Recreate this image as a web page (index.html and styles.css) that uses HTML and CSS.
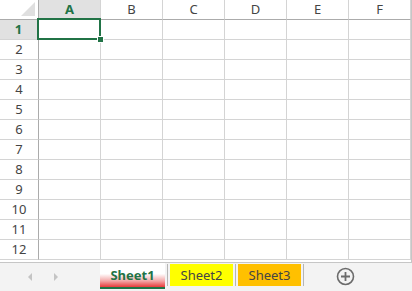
FILE: index.html
```html
<html>
  <head>
    <link rel="stylesheet" href="styles.css">
  </head>
  <body>
    <div class="book">
      <div class="sheet" id="sheet">
        <div class="corner"></div>
      </div>
      <div class="tabbar">
        <div class="nav">
          <span class="arrow arrow-left"></span>
          <span class="arrow arrow-right"></span>
        </div>
        <div class="tabs">
          <span class="tab tab-active">Sheet1</span>
          <span class="sep"></span>
          <span class="tab tab-yellow">Sheet2</span>
          <span class="sep"></span>
          <span class="tab tab-orange">Sheet3</span>
          <span class="sep"></span>
          <span class="add">
            <svg width="19" height="19" viewBox="0 0 19 19">
              <circle cx="9.5" cy="9.5" r="8" fill="none" stroke="#6b6b6b" stroke-width="1.6"/>
              <path d="M9.5 5v9M5 9.5h9" stroke="#6b6b6b" stroke-width="1.8"/>
            </svg>
          </span>
        </div>
      </div>
    </div>

    <script>
      const sheet = document.getElementById('sheet');
      const cols = ['A', 'B', 'C', 'D', 'E', 'F'];

      cols.forEach((c, i) => {
        const head = document.createElement('div');
        head.className = 'col-head' + (i === 0 ? ' is-current' : '');
        head.textContent = c;
        sheet.appendChild(head);
      });

      for (let r = 1; r <= 12; r += 1) {
        const head = document.createElement('div');
        head.className = 'row-head' + (r === 1 ? ' is-current' : '');
        head.textContent = r;
        sheet.appendChild(head);
        cols.forEach((c, i) => {
          const cell = document.createElement('div');
          cell.className = 'cell' + (r === 1 && i === 0 ? ' is-selected' : '');
          sheet.appendChild(cell);
        });
      }
    </script>
  </body>
</html>
```
FILE: styles.css
```css
html,
body {
  margin: 0;
  padding: 0;
}
body {
  font-family: "Noto Sans", "Open Sans", sans-serif;
  font-size: 13px;
  color: #444;
  background: #fff;
}
.book {
  width: 412px;
  height: 291px;
  display: flex;
  flex-direction: column;
  overflow: hidden;
}
.sheet {
  display: grid;
  grid-template-columns: 39px repeat(6, 62px);
  grid-template-rows: repeat(13, 20px);
  height: 262px;
  border-right: 1px solid #c6c6c6;
  box-sizing: border-box;
  width: 412px;
}
.corner {
  position: relative;
  background: #fff;
  border-right: 1px solid #ababab;
  border-bottom: 1px solid #ababab;
}
.corner::after {
  content: "";
  position: absolute;
  right: 3px;
  bottom: 3px;
  border-left: 14px solid transparent;
  border-bottom: 14px solid #dfdfdf;
}
.col-head,
.row-head {
  display: flex;
  align-items: center;
  justify-content: center;
  color: #444;
  line-height: 1;
}
.col-head {
  border-right: 1px solid #d4d4d4;
  border-bottom: 1px solid #ababab;
}
.row-head {
  border-right: 1px solid #ababab;
  border-bottom: 1px solid #d4d4d4;
}
.is-current {
  background: #e1e1e1;
  color: #217346;
  font-weight: bold;
}
.col-head.is-current {
  border-bottom: 2px solid #217346;
}
.row-head.is-current {
  border-right: 2px solid #217346;
}
.cell {
  border-right: 1px solid #d4d4d4;
  border-bottom: 1px solid #d4d4d4;
}
.is-selected {
  position: relative;
}
.is-selected::before {
  content: "";
  position: absolute;
  left: -2px;
  top: -2px;
  right: -1px;
  bottom: -1px;
  border: 2px solid #217346;
}
.is-selected::after {
  content: "";
  position: absolute;
  right: -4px;
  bottom: -4px;
  width: 5px;
  height: 5px;
  background: #217346;
  border: 1px solid #fff;
}
.tabbar {
  flex: 1;
  display: flex;
  align-items: stretch;
  background: #f3f3f3;
  border-top: 1px solid #c6c6c6;
}
.nav {
  width: 100px;
  display: flex;
  align-items: center;
  justify-content: center;
  gap: 22px;
  padding-right: 14px;
  box-sizing: border-box;
}
.arrow {
  width: 0;
  height: 0;
  border-top: 4px solid transparent;
  border-bottom: 4px solid transparent;
}
.arrow-left {
  border-right: 4px solid #c4c4c4;
}
.arrow-right {
  border-left: 4px solid #c4c4c4;
}
.tabs {
  display: flex;
  align-items: flex-start;
}
.tab {
  width: 63px;
  height: 22px;
  margin-top: 1px;
  display: flex;
  align-items: center;
  justify-content: center;
  color: #444;
}
.tab-active {
  width: 65px;
  height: 24px;
  margin-top: 0;
  color: #217346;
  font-weight: bold;
  background: linear-gradient(#fff 0%, #fff 45%, #f4a6a6 75%, #e83a3a 100%);
  border-bottom: 2px solid #217346;
}
.tab-yellow {
  background: #ffff00;
  margin-left: 2px;
}
.tab-orange {
  background: #ffc000;
  margin-left: 2px;
}
.sep {
  width: 1px;
  height: 22px;
  margin: 1px 0 0 2px;
  background: #b5b5b5;
}
.add {
  margin: 4px 0 0 32px;
  display: flex;
}
```
